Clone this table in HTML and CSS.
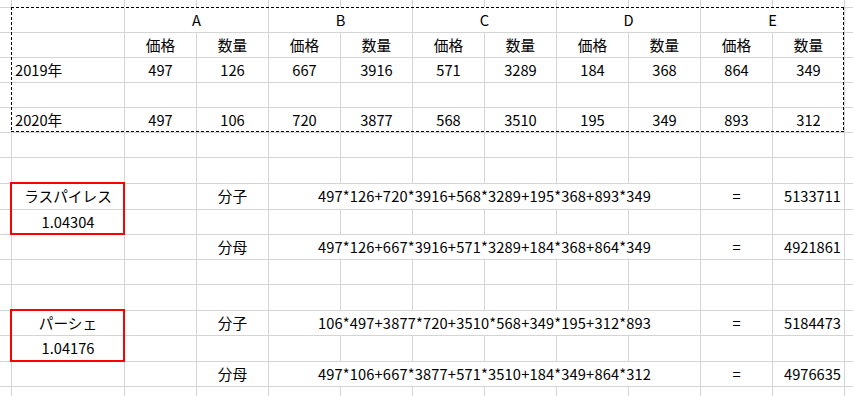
FILE: index.html
```html
<!DOCTYPE html>
<html lang="ja">
<head>
<meta charset="utf-8">
<title>ラスパイレス・パーシェ</title>
<link rel="stylesheet" href="styles.css">
</head>
<body>
<div class="sheet">
  <div class="row r0"></div>
  <div class="row">
    <div class="cell m c3 s2">A</div>
    <div class="cell m c5 s2">B</div>
    <div class="cell m c7 s2">C</div>
    <div class="cell m c9 s2">D</div>
    <div class="cell m c11 s2">E</div>
  </div>
  <div class="row">
    <div class="cell c3">価格</div><div class="cell">数量</div>
    <div class="cell">価格</div><div class="cell">数量</div>
    <div class="cell">価格</div><div class="cell">数量</div>
    <div class="cell">価格</div><div class="cell">数量</div>
    <div class="cell">価格</div><div class="cell">数量</div>
  </div>
  <div class="row">
    <div class="cell c2 left">2019年</div>
    <div class="cell">497</div><div class="cell">126</div>
    <div class="cell">667</div><div class="cell">3916</div>
    <div class="cell">571</div><div class="cell">3289</div>
    <div class="cell">184</div><div class="cell">368</div>
    <div class="cell">864</div><div class="cell">349</div>
  </div>
  <div class="row"></div>
  <div class="row">
    <div class="cell c2 left">2020年</div>
    <div class="cell">497</div><div class="cell">106</div>
    <div class="cell">720</div><div class="cell">3877</div>
    <div class="cell">568</div><div class="cell">3510</div>
    <div class="cell">195</div><div class="cell">349</div>
    <div class="cell">893</div><div class="cell">312</div>
  </div>
  <div class="row"></div>
  <div class="row tall"></div>
  <div class="row tall">
    <div class="cell c2 boxed">ラスパイレス</div>
    <div class="cell c4">分子</div>
    <div class="cell m f c5 s6">497*126+720*3916+568*3289+195*368+893*349</div>
    <div class="cell c11">=</div>
    <div class="cell c12 right">5133711</div>
  </div>
  <div class="row">
    <div class="cell c2">1.04304</div>
  </div>
  <div class="row">
    <div class="cell c4">分母</div>
    <div class="cell m f c5 s6">497*126+667*3916+571*3289+184*368+864*349</div>
    <div class="cell c11">=</div>
    <div class="cell c12 right">4921861</div>
  </div>
  <div class="row"></div>
  <div class="row tall"></div>
  <div class="row">
    <div class="cell c2 boxed">パーシェ</div>
    <div class="cell c4">分子</div>
    <div class="cell m f c5 s6">106*497+3877*720+3510*568+349*195+312*893</div>
    <div class="cell c11">=</div>
    <div class="cell c12 right">5184473</div>
  </div>
  <div class="row tall">
    <div class="cell c2">1.04176</div>
  </div>
  <div class="row">
    <div class="cell c4">分母</div>
    <div class="cell m f c5 s6">497*106+667*3877+571*3510+184*349+864*312</div>
    <div class="cell c11">=</div>
    <div class="cell c12 right">4976635</div>
  </div>
  <div class="row end"></div>
  <div class="marquee"></div>
</div>
</body>
</html>
```

FILE: styles.css
```css
html, body {
  margin: 0;
  padding: 0;
  background: #fff;
}

body {
  width: 853px;
  height: 396px;
  overflow: hidden;
  font-family: "Noto Sans CJK JP", "Noto Sans", sans-serif;
  font-size: 14.67px;
  color: #000;
}

.sheet {
  position: relative;
  width: 853px;
}

.row {
  box-sizing: border-box;
  height: 25px;
  border-bottom: 1px solid #d4d4d4;
  display: grid;
  grid-template-columns: 12px 113px repeat(10, 72px) 1fr;
  grid-template-rows: 1fr;
  background-image:
    linear-gradient(#d4d4d4, #d4d4d4),
    repeating-linear-gradient(to right, #d4d4d4 0 1px, transparent 1px 72px);
  background-position: 11px 0, 124px 0;
  background-size: 1px 100%, 721px 100%;
  background-repeat: no-repeat;
}

.row.r0 { height: 8px; }
.row.tall { height: 26px; }
.row.end { height: 10px; border-bottom: 0; }

.cell {
  display: flex;
  align-items: center;
  justify-content: center;
  padding-right: 1px;
  white-space: nowrap;
  line-height: 1;
}

.cell.left { justify-content: flex-start; padding-left: 3px; }
.cell.right { justify-content: flex-end; padding-right: 4px; }
.cell.f { letter-spacing: 0.15px; }

.c2 { grid-column-start: 2; }
.c3 { grid-column-start: 3; }
.c4 { grid-column-start: 4; }
.c5 { grid-column-start: 5; }
.c7 { grid-column-start: 7; }
.c9 { grid-column-start: 9; }
.c11 { grid-column-start: 11; }
.c12 { grid-column-start: 12; }
.s2 { grid-column-end: span 2; }
.s6 { grid-column-end: span 6; }

.m {
  background: #fff;
  box-shadow: inset -1px 0 #d4d4d4;
}

.boxed { position: relative; }
.boxed::after {
  content: "";
  position: absolute;
  left: -2px;
  top: -2px;
  width: 115px;
  height: 53px;
  box-sizing: border-box;
  border: 2px solid #ff0000;
  pointer-events: none;
}

.marquee {
  position: absolute;
  left: 11px;
  top: 7px;
  width: 833px;
  height: 125px;
  pointer-events: none;
  background-image:
    repeating-linear-gradient(to right, #000 0 3px, #fff 3px 5px),
    repeating-linear-gradient(to right, #000 0 3px, #fff 3px 5px),
    repeating-linear-gradient(to bottom, #000 0 3px, #fff 3px 5px),
    repeating-linear-gradient(to bottom, #000 0 3px, #fff 3px 5px);
  background-position: 0 0, 0 100%, 0 0, 100% 0;
  background-size: 100% 1px, 100% 1px, 1px 100%, 1px 100%;
  background-repeat: no-repeat;
}
```
